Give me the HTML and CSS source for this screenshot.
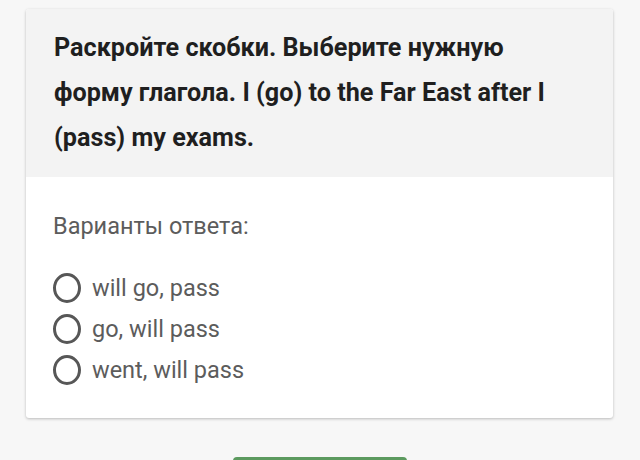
FILE: index.html
```html
<!DOCTYPE html>
<html lang="ru">
<head>
<meta charset="utf-8">
<link rel="stylesheet" href="styles.css">
</head>
<body>
<div class="page">
  <div class="card">
    <div class="question">Раскройте скобки. Выберите нужную форму глагола. I (go) to the Far East after I (pass) my exams.</div>
    <div class="answers">
      <div class="label">Варианты ответа:</div>
      <ul class="options">
        <li class="option"><span class="radio"></span><span>will go, pass</span></li>
        <li class="option"><span class="radio"></span><span>go, will pass</span></li>
        <li class="option"><span class="radio"></span><span>went, will pass</span></li>
      </ul>
    </div>
  </div>
  <div class="actions"><button class="btn"></button></div>
</div>
</body>
</html>
```
FILE: styles.css
```css
html, body { margin: 0; padding: 0; background: #f7f7f7; overflow: hidden; }
body { font-family: Roboto, "Noto Sans", sans-serif; }
.page { padding: 9px 27px 0 26px; }
.card {
  background: #fff;
  border-radius: 3px;
  box-shadow: 0 1px 3px rgba(0,0,0,0.25);
  overflow: hidden;
}
.question {
  background: #f3f3f3;
  color: #1f1f1f;
  font-weight: 700;
  font-size: 25.2px;
  line-height: 45px;
  padding: 16px 40px 14px 28px;
  height: 138px;
}
.answers { padding: 34px 28px 28px 27px; color: #5c5c5c; }
.label { font-size: 23.5px; line-height: 30px; }
.options { list-style: none; margin: 26px 0 0; padding: 0; }
.option { display: flex; align-items: center; height: 41px; font-size: 23.5px; }
.radio {
  width: 28px; height: 30px; box-sizing: border-box;
  border: 3.5px solid #575757; border-radius: 50%;
  margin-right: 11px; flex: none;
}
.actions { display: flex; justify-content: center; padding-top: 39px; }
.btn { width: 174px; height: 40px; background: #5c9a5f; border: none; border-radius: 4px; }
```
